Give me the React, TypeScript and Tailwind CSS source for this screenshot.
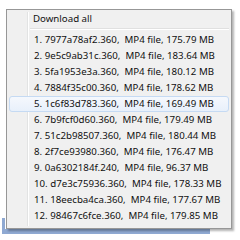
import React from "react";

const items = [
  "7977a78af2.360,  MP4 file, 175.79 MB",
  "9e5c9ab31c.360,  MP4 file, 183.64 MB",
  "5fa1953e3a.360,  MP4 file, 180.12 MB",
  "7884f35c00.360,  MP4 file, 178.62 MB",
  "1c6f83d783.360,  MP4 file, 169.49 MB",
  "7b9fcf0d60.360,  MP4 file, 179.49 MB",
  "51c2b98507.360,  MP4 file, 180.44 MB",
  "2f7ce93980.360,  MP4 file, 176.47 MB",
  "0a6302184f.240,  MP4 file, 96.37 MB",
  "d7e3c75936.360,  MP4 file, 178.33 MB",
  "18eecba4ca.360,  MP4 file, 177.67 MB",
  "98467c6fce.360,  MP4 file, 179.85 MB",
];

export default function App() {
  return (
    <div
      className="relative w-[240px] h-[240px] bg-white overflow-hidden"
      style={{ fontFamily: '"Noto Sans", "Open Sans", sans-serif' }}
    >
      <div className="absolute left-[2px] top-[218px] w-[208px] h-[16px] border-l-[3px] border-b-[5px] border-[#8fa9d2]" />
      <div className="relative ml-[6px] mt-[9px] w-[226px] h-[220px] border border-[#979797] bg-[#f0f0f0] shadow-[2px_2px_2px_rgba(0,0,0,0.3)]">
        <div className="absolute left-[20px] top-[2px] bottom-[2px] w-[2px] border-l border-[#e2e3e3] bg-white" />
        <div className="relative flex flex-col p-[2px] text-[9.7px] leading-none text-[#111] whitespace-pre">
          <div className="h-[13px] flex items-center pl-[24px]">Download all</div>
          <div className="ml-[21px] mt-[3px] mb-[2px] h-[2px] border-t border-[#e0e0e0] bg-white" />
          {items.map((t, i) => (
            <div
              key={i}
              className={
                "h-[16px] flex items-center pl-[24px] rounded-[3px] border " +
                (i === 4
                  ? "border-[#c5daf3] bg-gradient-to-b from-[#f5f8fd] to-[#e8f0fb]"
                  : "border-transparent")
              }
            >
              {i + 1}. {t}
            </div>
          ))}
        </div>
      </div>
    </div>
  );
}
